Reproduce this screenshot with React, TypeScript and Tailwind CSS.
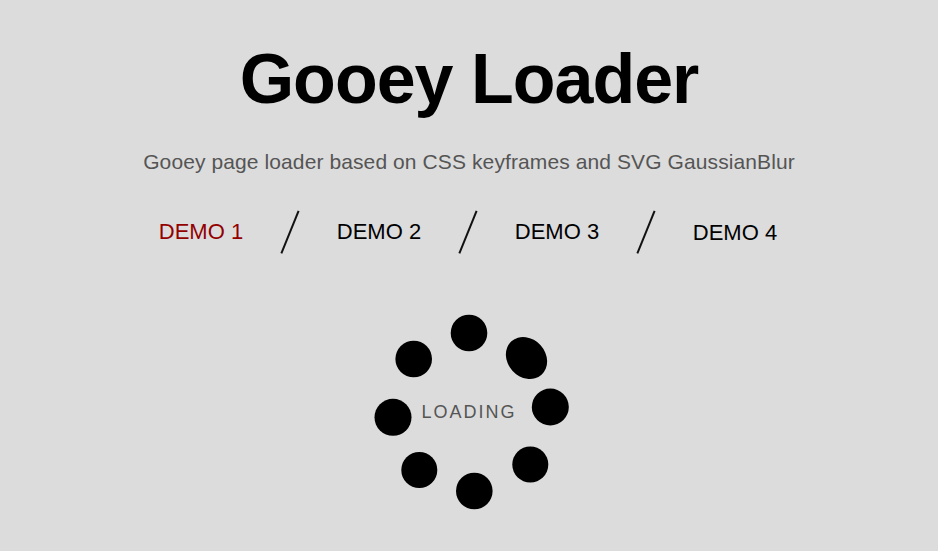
const demos = ["DEMO 1", "DEMO 2", "DEMO 3", "DEMO 4"];

// dot centres measured in the loader's 200x200 box
const dots = [
  { cx: 100, cy: 22, rx: 18.3, ry: 18.3, rot: 0 },
  { cx: 157.5, cy: 47, rx: 22.5, ry: 19, rot: 48 },
  { cx: 181.3, cy: 96, rx: 18.5, ry: 18.5, rot: 0 },
  { cx: 161.3, cy: 153.5, rx: 18, ry: 18, rot: 0 },
  { cx: 105.3, cy: 180, rx: 18.3, ry: 18.3, rot: 0 },
  { cx: 50.3, cy: 159, rx: 18, ry: 18, rot: 0 },
  { cx: 24, cy: 106.3, rx: 18.5, ry: 18.5, rot: 0 },
  { cx: 44.7, cy: 48, rx: 18.3, ry: 18.3, rot: 0 },
];

function Loader() {
  return (
    <div className="relative w-[200px] h-[200px]">
      <svg width="200" height="200" viewBox="0 0 200 200">
        {dots.map((d, i) => (
          <ellipse
            key={i}
            cx={d.cx}
            cy={d.cy}
            rx={d.rx}
            ry={d.ry}
            transform={`rotate(${d.rot} ${d.cx} ${d.cy})`}
            fill="#000"
          />
        ))}
      </svg>
      <div className="absolute inset-0 flex items-center justify-center">
        <span className="text-[18px] leading-none tracking-[2px] text-[#555] pt-[2px]">LOADING</span>
      </div>
    </div>
  );
}

export default function App() {
  return (
    <div
      className="min-h-[551px] bg-[#dcdcdc] flex flex-col items-center pt-[44px]"
      style={{ fontFamily: '"Liberation Sans", Arial, sans-serif' }}
    >
      <h1 className="text-[70px] font-bold leading-none tracking-[-1px] text-black">Gooey Loader</h1>

      <p className="mt-[37px] text-[21px] leading-none tracking-[0.1px] text-[#555]">
        Gooey page loader based on CSS keyframes and SVG GaussianBlur
      </p>

      {/* demo links */}
      <nav className="mt-[37px] flex items-center h-[46px] -translate-x-px">
        {demos.map((d, i) => (
          <div key={d} className="flex items-center">
            {i > 0 && <div className="w-[18px] flex justify-center"><div className="w-[1.5px] h-[46px] bg-[#111] rotate-[22deg]" /></div>}
            <a className={`w-[160px] text-center text-[22px] leading-none ${i === 0 ? "text-[#930000]" : "text-black"} ${i === 3 ? "pt-[2px]" : ""}`}>
              {d}
            </a>
          </div>
        ))}
      </nav>

      <div className="mt-[56px]">
        <Loader />
      </div>
    </div>
  );
}
